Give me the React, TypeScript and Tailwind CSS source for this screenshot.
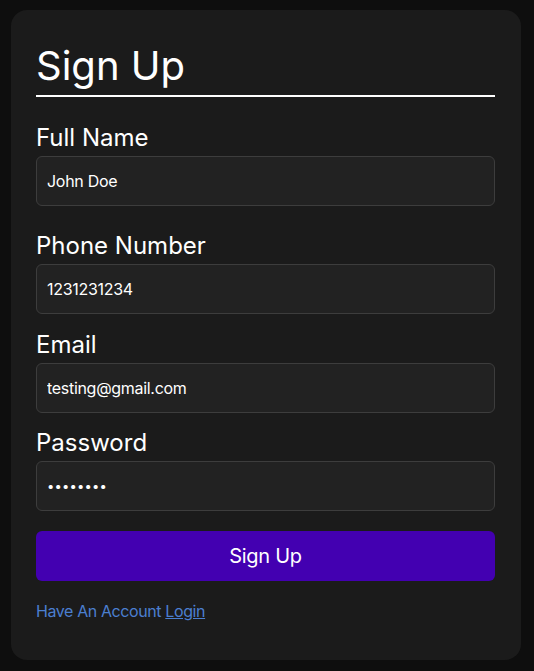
import React from 'react'

// Sign up card — dark theme form
const fields = [
  { label: 'Full Name', type: 'text', value: 'John Doe', gap: 'mt-[26px]', text: 'text-[16px] tracking-[-0.3px]' },
  { label: 'Phone Number', type: 'tel', value: '1231231234', gap: 'mt-[25px]', text: 'text-[16px] tracking-[-0.3px]' },
  { label: 'Email', type: 'email', value: 'testing@gmail.com', gap: 'mt-[16px]', text: 'text-[16px] tracking-[-0.3px]' },
  { label: 'Password', type: 'password', value: '12345678', gap: 'mt-[15px]', text: 'text-[13px] tracking-[0.2px]' },
]

export default function App() {
  return (
    <div
      className="min-h-screen bg-[#0e0e0e] pt-[10px] pl-[11px]"
      style={{ fontFamily: 'Inter, "Liberation Sans", sans-serif' }}
    >
      <div className="w-[510px] h-[650px] rounded-2xl bg-[#1b1b1b] pl-[25px] pr-[26px] pt-[32px]">
        <h1 className="text-[40px] leading-[48px] text-white pb-[5px] border-b-2 border-white">
          Sign Up
        </h1>

        <form className="flex flex-col" onSubmit={(e) => e.preventDefault()}>
          {fields.map((f) => (
            <div key={f.label} className={`flex flex-col ${f.gap}`}>
              <label className="text-[24px] leading-[29px] text-white mb-[4px]">{f.label}</label>
              <input
                type={f.type}
                defaultValue={f.value}
                className={`h-[50px] rounded-md border border-[#3d3d3d] bg-[#222222] px-[10px] text-white outline-none ${f.text}`}
              />
            </div>
          ))}

          <button
            type="submit"
            className="mt-[20px] h-[50px] rounded-md bg-[#4300b1] text-[20px] tracking-[-0.3px] text-white"
          >
            Sign Up
          </button>
        </form>

        <p className="mt-[18px] text-[16px] leading-[24px] tracking-[-0.4px] text-[#4b7fd0]">
          Have An Account <a href="#" className="underline">Login</a>
        </p>
      </div>
    </div>
  )
}
